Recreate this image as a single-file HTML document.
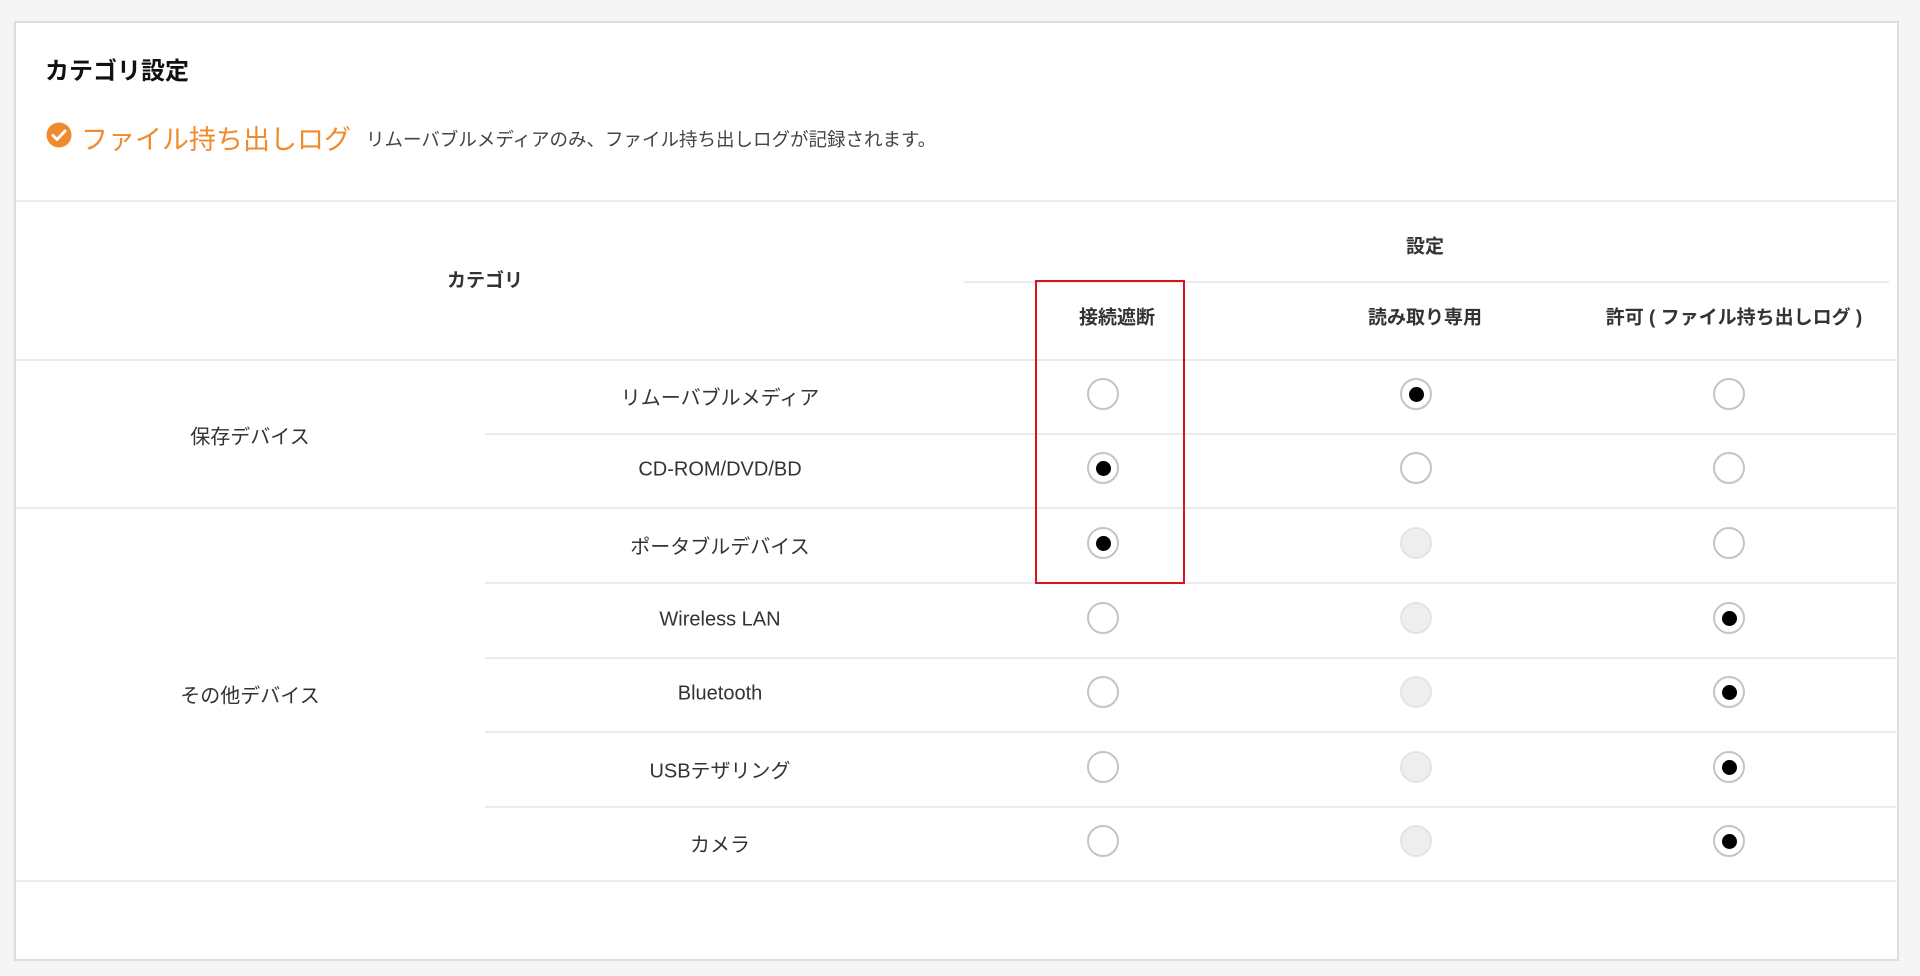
<!DOCTYPE html>
<html><head><meta charset="utf-8"><style>
*{margin:0;padding:0;box-sizing:border-box}
body{width:1920px;height:976px;background:#f5f5f5;font-family:"Liberation Sans","Noto Sans CJK JP",sans-serif;color:#333;position:relative;overflow:hidden}
.card{position:absolute;left:14px;top:21px;width:1885px;height:940px;background:#fff;border:2px solid #ddd}
.a{position:absolute;white-space:nowrap}
.c{transform:translate(-50%,-50%)}
.h{position:absolute;height:2px;background:#ebebeb}
.r{position:absolute;width:32px;height:32px;border-radius:50%;border:2px solid #c4c4c4;background:#fff;transform:translate(-50%,-50%)}
.r.on::after{content:"";position:absolute;left:50%;top:50%;width:15px;height:15px;margin:-7.5px 0 0 -7.5px;border-radius:50%;background:#000}
.r.dis{background:#eee;border-color:#e4e4e4}
.t{font-size:20px;color:#333}
.b{font-size:19px;font-weight:bold;color:#333}
</style></head><body>
<div class="card"></div>
<div class="a" style="left:45px;top:51px;font-size:24px;font-weight:bold;color:#111">カテゴリ設定</div>
<svg class="a" style="left:46px;top:122px" width="26" height="26" viewBox="0 0 26 26"><circle cx="13" cy="13" r="12.5" fill="#f08a2c"/><path d="M7 13.5l4 4 8-8.5" stroke="#fff" stroke-width="3" fill="none" stroke-linecap="round" stroke-linejoin="round"/></svg>
<div class="a" style="left:81px;top:118px;font-size:27px;color:#f08a2c">ファイル持ち出しログ</div>
<div class="a" style="left:366px;top:126px;font-size:18.5px;color:#444">リムーバブルメディアのみ、ファイル持ち出しログが記録されます。</div>
<div class="h" style="left:16px;top:200px;width:1882px"></div>
<div class="a c b" style="left:1425px;top:245px">設定</div>
<div class="h" style="left:964px;top:281px;width:925px"></div>
<div class="a c b" style="left:485px;top:279px">カテゴリ</div>
<div class="a c b" style="left:1117px;top:316px">接続遮断</div>
<div class="a c b" style="left:1425px;top:316px">読み取り専用</div>
<div class="a c b" style="left:1734px;top:316px">許可 ( ファイル持ち出しログ )</div>
<div class="h" style="left:16px;top:359px;width:1882px"></div>
<div class="h" style="left:485px;top:433px;width:1413px"></div>
<div class="h" style="left:16px;top:507px;width:1882px"></div>
<div class="h" style="left:485px;top:582px;width:1413px"></div>
<div class="h" style="left:485px;top:657px;width:1413px"></div>
<div class="h" style="left:485px;top:731px;width:1413px"></div>
<div class="h" style="left:485px;top:806px;width:1413px"></div>
<div class="h" style="left:16px;top:880px;width:1882px"></div>
<div class="a c t" style="left:250px;top:435px">保存デバイス</div>
<div class="a c t" style="left:250px;top:694px">その他デバイス</div>
<div class="a c t" style="left:720px;top:396px">リムーバブルメディア</div>
<div class="a c t" style="left:720px;top:470px">CD-ROM/DVD/BD</div>
<div class="a c t" style="left:720px;top:545px">ポータブルデバイス</div>
<div class="a c t" style="left:720px;top:620px">Wireless LAN</div>
<div class="a c t" style="left:720px;top:694px">Bluetooth</div>
<div class="a c t" style="left:720px;top:769px">USBテザリング</div>
<div class="a c t" style="left:720px;top:843px">カメラ</div>
<div class="r" style="left:1103px;top:394px"></div><div class="r on" style="left:1416px;top:394px"></div><div class="r" style="left:1729px;top:394px"></div>
<div class="r on" style="left:1103px;top:468px"></div><div class="r" style="left:1416px;top:468px"></div><div class="r" style="left:1729px;top:468px"></div>
<div class="r on" style="left:1103px;top:543px"></div><div class="r dis" style="left:1416px;top:543px"></div><div class="r" style="left:1729px;top:543px"></div>
<div class="r" style="left:1103px;top:618px"></div><div class="r dis" style="left:1416px;top:618px"></div><div class="r on" style="left:1729px;top:618px"></div>
<div class="r" style="left:1103px;top:692px"></div><div class="r dis" style="left:1416px;top:692px"></div><div class="r on" style="left:1729px;top:692px"></div>
<div class="r" style="left:1103px;top:767px"></div><div class="r dis" style="left:1416px;top:767px"></div><div class="r on" style="left:1729px;top:767px"></div>
<div class="r" style="left:1103px;top:841px"></div><div class="r dis" style="left:1416px;top:841px"></div><div class="r on" style="left:1729px;top:841px"></div>
<div class="a" style="left:1035px;top:280px;width:150px;height:304px;border:2px solid #e0111b"></div>
</body></html>
